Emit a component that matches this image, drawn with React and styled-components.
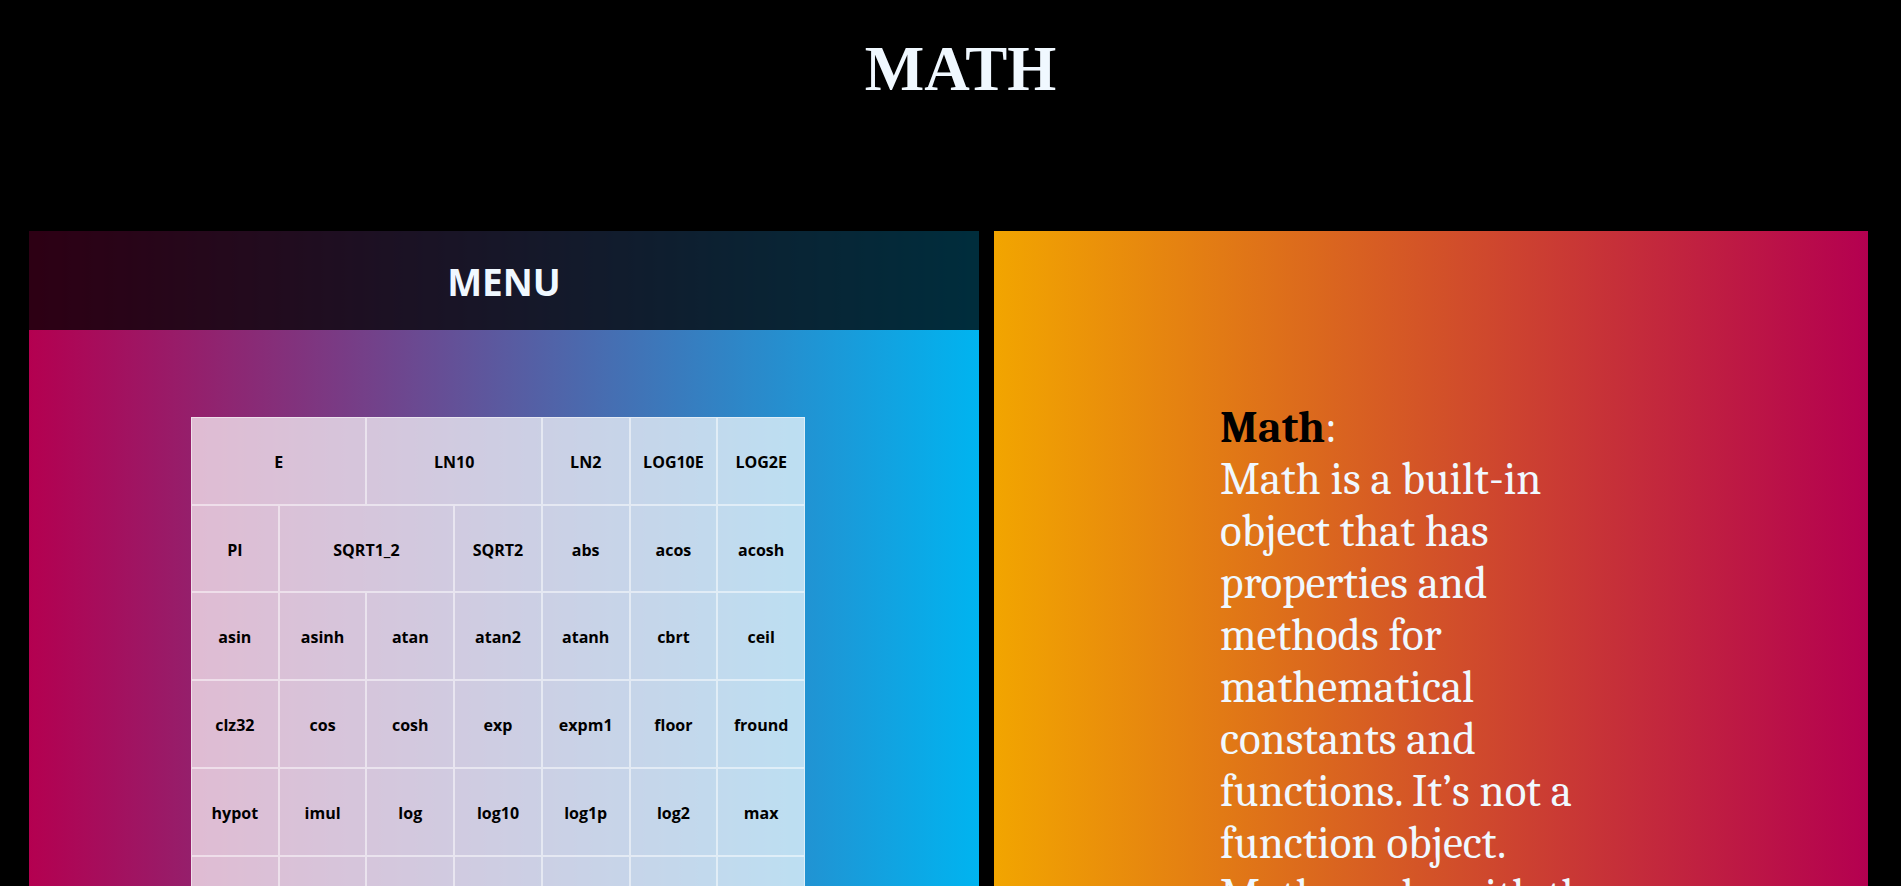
import React from "react";
import styled, { createGlobalStyle } from "styled-components";

const GlobalStyle = createGlobalStyle`
  *, *::before, *::after {
    box-sizing: border-box;
  }
  body {
    margin: 0;
    background: #000;
    color: aliceblue;
    font-family: "Segoe UI", "Open Sans", "Noto Sans", sans-serif;
  }
`;

const PageHeader = styled.header`
  padding: 32px 0 125px 20px;
  text-align: center;
`;

const Title = styled.h1`
  margin: 0;
  font: bold 63px/74px "Times New Roman", "Liberation Serif", serif;
`;

const Columns = styled.main`
  display: grid;
  grid-template-columns: 950fr 874fr;
  column-gap: 15px;
  padding: 0 33px 30px 29px;
`;

const MenuPanel = styled.section`
  background: linear-gradient(to right, rgb(180, 0, 80), rgb(0, 180, 240));
`;

const MenuTitle = styled.h2`
  margin: 0;
  padding: 25px 0 22px;
  background: rgba(0, 0, 0, 0.75);
  text-align: center;
  font-size: 37px;
  font-weight: 700;
  line-height: 52px;
`;

const GridArea = styled.div`
  display: flex;
  justify-content: center;
  padding: 87px 12px 87px 0;
`;

const ButtonGrid = styled.div`
  display: grid;
  grid-template-columns: repeat(7, 1fr);
  grid-template-rows: repeat(7, 1fr);
  width: 614px;
  max-width: 100%;
  aspect-ratio: 1;
`;

const MathButton = styled.button`
  grid-column: span ${({ $span }) => $span};
  min-width: 0;
  padding: 2px 0 0;
  border: 1px solid rgba(255, 255, 255, 0.5);
  background: rgba(255, 255, 255, 0.7);
  color: #000;
  font-family: inherit;
  font-size: 16px;
  font-weight: 700;
  cursor: pointer;

  &:hover {
    background: #fff;
  }
`;

const InfoPanel = styled.section`
  padding: 170px 40px 40px 226px;
  background: linear-gradient(to right, rgb(242, 165, 0), rgb(180, 0, 80));
`;

const Description = styled.div`
  max-width: 400px;
  font: 45px/52px Cambria, "Liberation Serif", serif;
`;

const Paragraph = styled.p`
  margin: 0;
`;

const Term = styled.strong`
  color: #000;
`;

const members = [
  ["E", 2], ["LN10", 2], ["LN2"], ["LOG10E"], ["LOG2E"],
  ["PI"], ["SQRT1_2", 2], ["SQRT2"], ["abs"], ["acos"], ["acosh"],
  ["asin"], ["asinh"], ["atan"], ["atan2"], ["atanh"], ["cbrt"], ["ceil"],
  ["clz32"], ["cos"], ["cosh"], ["exp"], ["expm1"], ["floor"], ["fround"],
  ["hypot"], ["imul"], ["log"], ["log10"], ["log1p"], ["log2"], ["max"],
  ["min"], ["pow"], ["random"], ["round"], ["sign"], ["sin"], ["sinh"],
  ["sqrt", 2], ["tan", 2], ["tanh", 2], ["trunc"],
];

export default function App() {
  return (
    <>
      <GlobalStyle />
      <PageHeader>
        <Title>MATH</Title>
      </PageHeader>
      <Columns>
        <MenuPanel>
          <MenuTitle>MENU</MenuTitle>
          <GridArea>
            <ButtonGrid>
              {members.map(([name, span = 1]) => (
                <MathButton key={name} type="button" $span={span}>
                  {name}
                </MathButton>
              ))}
            </ButtonGrid>
          </GridArea>
        </MenuPanel>
        <InfoPanel>
          <Description>
            <Paragraph>
              <Term>Math</Term>:
            </Paragraph>
            <Paragraph>
              Math is a built-in object that has properties and methods for
              mathematical constants and functions. It’s not a function object.
            </Paragraph>
            <Paragraph>Math works with the Number type.</Paragraph>
          </Description>
        </InfoPanel>
      </Columns>
    </>
  );
}
